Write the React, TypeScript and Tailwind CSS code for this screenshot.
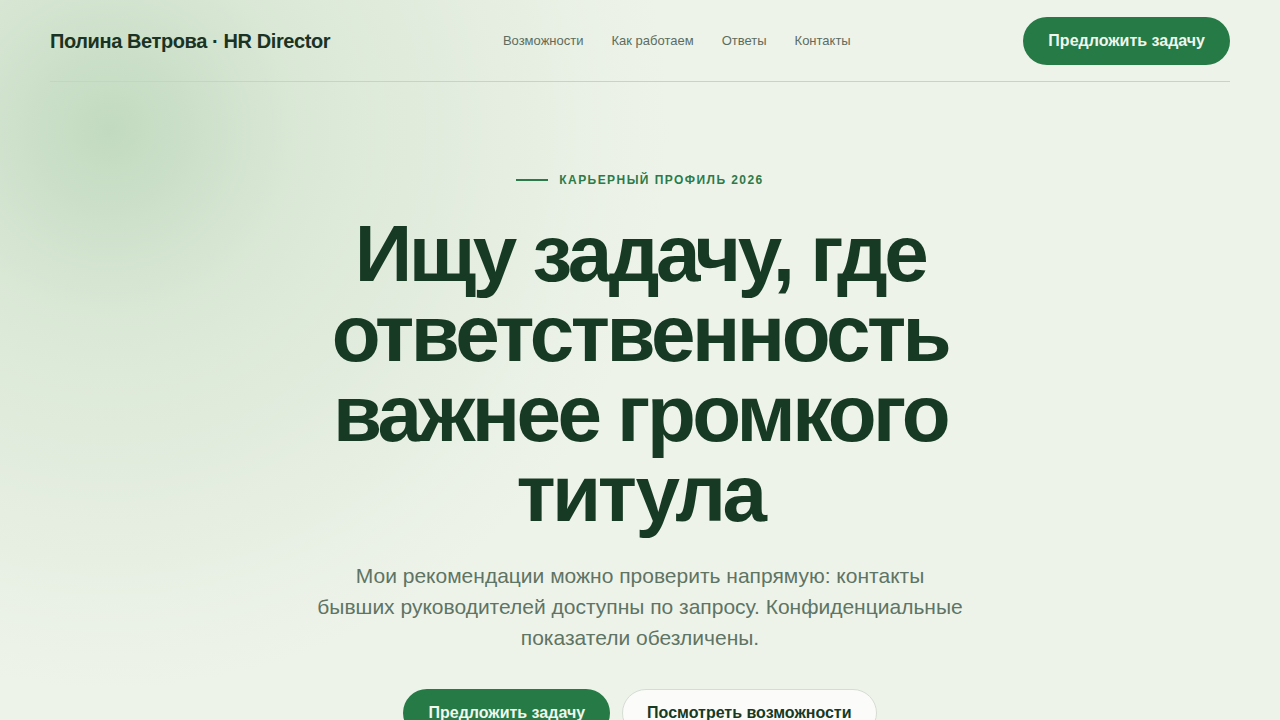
const navLinks = ['Возможности', 'Как работаем', 'Ответы', 'Контакты'];

export default function App() {
  return (
    <div
      className="min-h-screen w-full overflow-hidden bg-[#eef3ea] text-[#173a24]"
      style={{
        fontFamily: '"Liberation Sans", Arial, sans-serif',
        backgroundImage:
          'radial-gradient(circle at 110px 130px, rgba(186,214,184,0.85) 0px, rgba(205,224,201,0.6) 190px, rgba(238,243,234,0) 560px)',
      }}
    >
      <div className="mx-auto max-w-[1180px]">
        <header className="flex items-center justify-between border-b border-[#c7d3c6] pt-[17px] pb-[16px]">
          <a className="text-[20px] font-bold tracking-[-0.02em] text-[#1b3324]">
            Полина Ветрова · HR Director
          </a>
          <nav className="flex items-center gap-7 text-[13px] text-[#5b6d60]">
            {navLinks.map((l) => (
              <a key={l}>{l}</a>
            ))}
          </nav>
          <button className="h-12 rounded-full bg-[#257a46] px-[25px] text-[16px] font-bold text-[#eef6ee]">
            Предложить задачу
          </button>
        </header>

        <section className="flex flex-col items-center pt-[89px] text-center">
          <div className="flex items-center gap-[11px] text-[12px] font-bold uppercase tracking-[0.12em] text-[#2c7a49]">
            <span className="h-[2px] w-8 bg-[#2c7a49]" />
            Карьерный профиль 2026
          </div>
          <h1 className="mt-[25px] max-w-[700px] text-[80px] font-bold leading-[80px] tracking-[-0.044em] text-[#173a24]">
            Ищу задачу, где ответственность важнее громкого титула
          </h1>
          <p className="mt-[26px] max-w-[648px] text-[21px] leading-[31px] text-[#5e7464]">
            Мои рекомендации можно проверить напрямую: контакты бывших руководителей доступны по запросу. Конфиденциальные показатели обезличены.
          </p>
          <div className="mt-[36px] flex items-center gap-3">
            <button className="h-12 rounded-full bg-[#257a46] px-[25px] text-[16px] font-bold text-[#eef6ee]">
              Предложить задачу
            </button>
            <button className="h-12 rounded-full border border-[#d5ddd3] bg-[#fbfcf9] px-[24px] text-[16px] font-bold text-[#173a24]">
              Посмотреть возможности
            </button>
          </div>
        </section>
      </div>
    </div>
  );
}
